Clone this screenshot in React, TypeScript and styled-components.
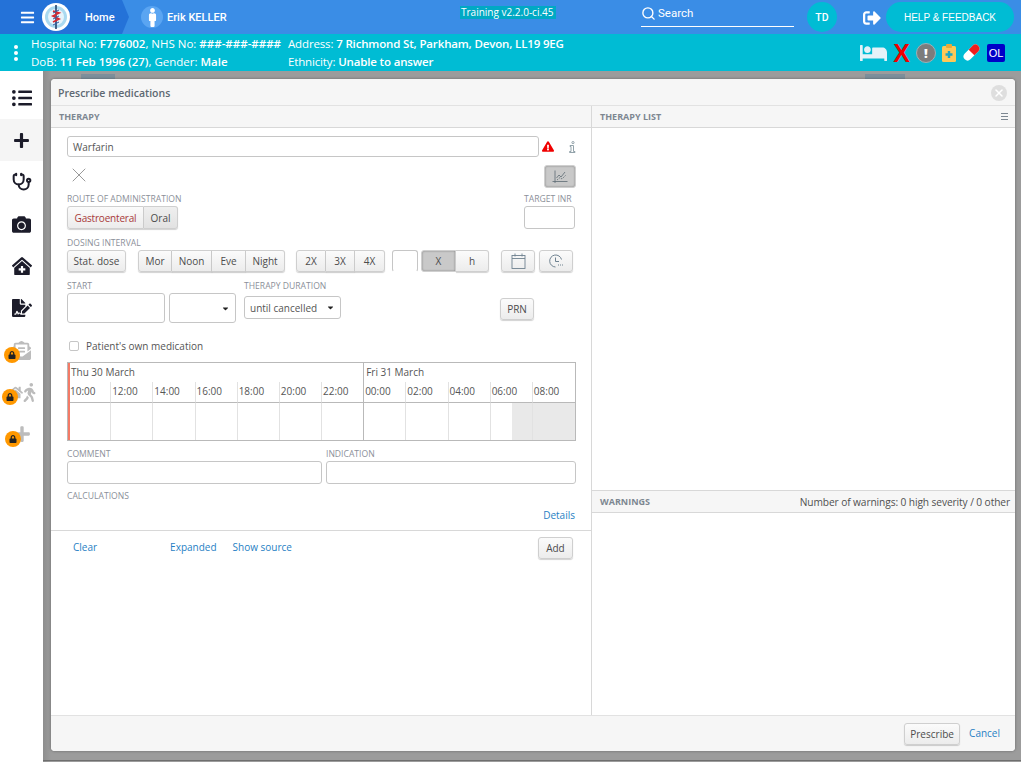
import React from 'react';
import styled, { createGlobalStyle } from 'styled-components';
import { Stethoscope, Search, X } from 'lucide-react';
import {
  FaBars,
  FaBed,
  FaCamera,
  FaCaretDown,
  FaClinicMedical,
  FaEnvelopeOpenText,
  FaExclamationTriangle,
  FaFileSignature,
  FaHome,
  FaListUl,
  FaLock,
  FaMale,
  FaPlus,
  FaSignOutAlt,
  FaWalking,
} from 'react-icons/fa';

const GlobalStyle = createGlobalStyle`
  html, body {
    margin: 0;
    padding: 0;
    background: #9a9a9a;
  }
  * {
    box-sizing: border-box;
  }
`;

const Page = styled.div`
  width: 1021px;
  height: 762px;
  display: flex;
  flex-direction: column;
  overflow: hidden;
  font-family: 'Open Sans', 'Noto Sans', sans-serif;
  font-size: 10px;
  color: #444;
`;

const TopBar = styled.header`
  height: 34px;
  flex: none;
  display: flex;
  align-items: center;
  background: #3a8de6;
  color: #fff;
  font-family: Roboto, sans-serif;
`;

const HomeCrumb = styled.div`
  height: 34px;
  width: 129px;
  flex: none;
  display: flex;
  align-items: center;
  padding-left: 20px;
  background: #2472d8;
  clip-path: polygon(0 0, 122px 0, 129px 17px, 122px 34px, 0 34px);
  font-size: 11px;
  font-weight: 500;
`;

const HomeLabel = styled.span`
  margin-left: 15px;
`;

const LogoWrap = styled.svg`
  width: 28px;
  height: 28px;
  margin-left: 7px;
  flex: none;
`;

const PatientAvatar = styled.div`
  width: 22px;
  height: 22px;
  margin-left: 12px;
  border-radius: 50%;
  background: #5aa5f2;
  display: flex;
  align-items: center;
  justify-content: center;
  font-size: 19px;
`;

const PatientName = styled.span`
  margin-left: 4px;
  width: 293px;
  font-size: 11px;
  font-weight: 500;
`;

const VersionTag = styled.span`
  margin-top: -9px;
  padding: 0 1px;
  width: 96px;
  background: #00a9c4;
  font-family: 'Open Sans', sans-serif;
  font-size: 10px;
  font-weight: 500;
  line-height: 13px;
  white-space: nowrap;
`;

const SearchBox = styled.div`
  width: 153px;
  height: 27px;
  margin-left: 85px;
  align-self: flex-start;
  display: flex;
  align-items: center;
  gap: 2px;
  border-bottom: 1px solid #fff;
  font-size: 11.5px;
`;

const UserBadge = styled.div`
  width: 30px;
  height: 30px;
  margin-left: 13px;
  border-radius: 50%;
  background: #00bcd4;
  display: flex;
  align-items: center;
  justify-content: center;
  font-size: 10.5px;
  font-weight: 500;
`;

const LogoutWrap = styled.div`
  margin-left: 26px;
  margin-top: 2px;
  display: flex;
  font-size: 18px;
`;

const HelpButton = styled.div`
  width: 128px;
  height: 30px;
  margin-left: 5px;
  border-radius: 15px;
  background: #00bcd4;
  display: flex;
  align-items: center;
  justify-content: center;
  font-family: 'Liberation Sans', sans-serif;
  font-size: 10px;
`;

const PatientBar = styled.div`
  height: 37px;
  flex: none;
  display: flex;
  align-items: center;
  background: #00bcd4;
  color: #fff;
  font-size: 11.5px;
  line-height: 18px;
`;

const Dots = styled.div`
  width: 31px;
  flex: none;
  display: flex;
  flex-direction: column;
  align-items: center;
  gap: 2px;
  span {
    width: 4px;
    height: 4px;
    border-radius: 50%;
    background: #fff;
  }
`;

const InfoColumn = styled.div<{ $w: number; $tight?: boolean }>`
  width: ${(p) => p.$w}px;
  flex: none;
  white-space: nowrap;
  letter-spacing: ${(p) => (p.$tight ? '-0.15px' : '0')};
  b {
    font-weight: 600;
  }
`;

const StatusIcons = styled.div`
  flex: 1;
  display: flex;
  align-items: center;
  justify-content: flex-end;
  gap: 6px;
  padding-right: 16px;
`;

const BedIcon = styled(FaBed)`
  width: 27px;
  height: 22px;
  color: #e4f2f8;
`;

const RedCross = styled.span`
  font-family: 'Liberation Sans', sans-serif;
  font-size: 25px;
  line-height: 22px;
  font-weight: 700;
  color: #f00000;
`;

const AlertCircle = styled.span`
  width: 20px;
  height: 20px;
  border-radius: 50%;
  background: #7c7c7c;
  border: 1px solid #9fb0b5;
  display: flex;
  align-items: center;
  justify-content: center;
  font-size: 13px;
  font-weight: 800;
  color: #fff;
`;

const OlBadge = styled.span`
  width: 18px;
  height: 18px;
  border-radius: 2px;
  background: #0000c8;
  display: flex;
  align-items: center;
  justify-content: center;
  font-family: 'Liberation Sans', sans-serif;
  font-size: 11px;
  color: #fff;
`;

const Body = styled.div`
  flex: 1;
  min-height: 0;
  display: flex;
`;

const Sidebar = styled.nav`
  width: 43px;
  flex: none;
  display: flex;
  flex-direction: column;
  background: #fff;
  padding-top: 6px;
`;

const NavItem = styled.div<{ $active?: boolean; $off?: boolean }>`
  position: relative;
  height: 42px;
  display: flex;
  align-items: center;
  justify-content: center;
  font-size: 19px;
  color: ${(p) => (p.$off ? '#bcbcbc' : '#1c1c2a')};
  background: ${(p) => (p.$active ? '#f5f5f5' : 'transparent')};
`;

const LockBadge = styled.span<{ $left: number; $top: number }>`
  position: absolute;
  left: ${(p) => p.$left}px;
  top: ${(p) => p.$top}px;
  width: 16px;
  height: 16px;
  border-radius: 50%;
  background: #ff9800;
  display: flex;
  align-items: center;
  justify-content: center;
  font-size: 8px;
  color: #222;
`;

const HouseWalk = styled.span`
  display: flex;
  align-items: center;
  font-size: 15px;
  margin-left: 4px;
  svg + svg {
    margin-left: -3px;
    font-size: 19px;
  }
`;

const Main = styled.main`
  position: relative;
  flex: 1;
  min-width: 0;
  display: flex;
  padding: 8px 6px 11px 8px;
  background: linear-gradient(to right, #8e8e8e, #9c9c9c 8px);
`;

const GhostTab = styled.span<{ $left: number; $w: number }>`
  position: absolute;
  top: 3px;
  left: ${(p) => p.$left}px;
  width: ${(p) => p.$w}px;
  height: 5px;
  background: #7d8f9b;
`;

const GhostLine = styled.span`
  position: absolute;
  left: 0;
  right: 0;
  bottom: 1px;
  height: 1px;
  background: #6e6e6e;
`;

const Dialog = styled.section`
  position: relative;
  flex: 1;
  display: flex;
  flex-direction: column;
  border-radius: 4px;
  overflow: hidden;
  background: #fff;
  box-shadow: 0 0 3px rgba(0, 0, 0, 0.35);
`;

const DialogHeader = styled.div`
  height: 27px;
  flex: none;
  display: flex;
  align-items: center;
  justify-content: space-between;
  padding: 1px 8px 0 7px;
  background: #f6f6f6;
  border-bottom: 1px solid #e2e2e2;
`;

const DialogTitle = styled.span`
  font-size: 10.5px;
  font-weight: 600;
  color: #5d6872;
`;

const CloseButton = styled.span`
  width: 16px;
  height: 16px;
  border-radius: 50%;
  background: #dedede;
  color: #fff;
  display: flex;
  align-items: center;
  justify-content: center;
`;

const Panes = styled.div`
  flex: 1;
  min-height: 0;
  display: flex;
`;

const LeftPane = styled.div`
  width: 541px;
  flex: none;
  display: flex;
  flex-direction: column;
  border-right: 1px solid #d8d8d8;
`;

const RightPane = styled.div`
  flex: 1;
  display: flex;
  flex-direction: column;
`;

const SectionHeader = styled.div`
  height: 22px;
  flex: none;
  display: flex;
  align-items: center;
  justify-content: space-between;
  padding: 0 8px;
  background: #f6f6f6;
  border-bottom: 1px solid #d8d8d8;
  font-size: 9px;
  font-weight: 700;
  color: #7d8791;
`;

const WarningsHeader = styled(SectionHeader)`
  height: 23px;
  border-top: 1px solid #d8d8d8;
  padding-right: 5px;
`;

const WarningCount = styled.span`
  font-size: 10.2px;
  font-weight: 400;
  letter-spacing: -0.1px;
  color: #505050;
`;

const MenuGlyph = styled.span`
  width: 7px;
  height: 7px;
  margin-right: -1px;
  border-top: 1px solid #7d8791;
  border-bottom: 1px solid #7d8791;
  display: flex;
  align-items: center;
  &::before {
    content: '';
    width: 100%;
    height: 1px;
    background: #7d8791;
  }
`;

const ListArea = styled.div`
  flex: 1;
`;

const WarningArea = styled.div`
  height: 202px;
  flex: none;
`;

const Form = styled.div`
  height: 403px;
  flex: none;
  display: flex;
  flex-direction: column;
  padding: 8px 15px 0 16px;
  border-bottom: 1px solid #d8d8d8;
`;

const Row = styled.div<{ $top?: number }>`
  display: flex;
  align-items: flex-start;
  margin-top: ${(p) => p.$top ?? 0}px;
`;

const SpacedRow = styled(Row)`
  justify-content: space-between;
`;

const Field = styled.div<{ $ml?: number; $mt?: number; $mr?: number }>`
  display: flex;
  flex-direction: column;
  margin: ${(p) => p.$mt ?? 0}px ${(p) => p.$mr ?? 0}px 0 ${(p) => p.$ml ?? 0}px;
`;

const Label = styled.label`
  height: 13px;
  font-size: 8.6px;
  line-height: 13px;
  white-space: nowrap;
  color: #8b8f99;
  text-transform: uppercase;
`;

const TextBox = styled.div<{ $w: number; $h?: number; $ml?: number; $mt?: number; $open?: boolean }>`
  width: ${(p) => p.$w}px;
  height: ${(p) => p.$h ?? 23}px;
  margin: ${(p) => p.$mt ?? 0}px 0 0 ${(p) => p.$ml ?? 0}px;
  display: flex;
  align-items: center;
  justify-content: space-between;
  padding: 0 5px;
  background: #fff;
  border: 1px solid #c6c6c6;
  border-bottom-color: ${(p) => (p.$open ? 'transparent' : '#c6c6c6')};
  border-radius: 3px;
  font-size: 10px;
  color: #555;
`;

const Btn = styled.button<{ $w: number; $h?: number; $ml?: number; $mt?: number; $pressed?: boolean; $dark?: boolean; $danger?: boolean }>`
  width: ${(p) => p.$w}px;
  height: ${(p) => p.$h ?? 22}px;
  margin: ${(p) => p.$mt ?? 0}px 0 0 ${(p) => p.$ml ?? 0}px;
  padding: 0;
  display: flex;
  align-items: center;
  justify-content: center;
  flex: none;
  font-family: inherit;
  font-size: 10px;
  letter-spacing: ${(p) => (p.$danger ? '-0.2px' : '0')};
  color: ${(p) => (p.$danger ? '#a83a3a' : '#4c4c4c')};
  border: 1px solid #cfcfcf;
  border-radius: 3px;
  background: ${(p) =>
    p.$pressed
      ? '#c9c9c9'
      : p.$dark
        ? 'linear-gradient(#efefef, #e2e2e2)'
        : 'linear-gradient(#fbfbfb, #ececec)'};
  box-shadow: ${(p) =>
    p.$pressed ? 'inset 0 0 2px #777' : '0 1px 1px rgba(0, 0, 0, 0.18)'};
`;

const BtnGroup = styled.div<{ $ml?: number }>`
  display: flex;
  margin-left: ${(p) => p.$ml ?? 0}px;
  ${Btn} {
    border-radius: 0;
    border-left-width: 0;
  }
  ${Btn}:first-child {
    border-left-width: 1px;
    border-radius: 3px 0 0 3px;
  }
  ${Btn}:last-child {
    border-radius: 0 3px 3px 0;
  }
`;

const ChartToggle = styled(Btn)`
  color: #5d6b74;
`;

const InlineIcons = styled.div`
  margin-left: 3px;
  height: 21px;
  display: flex;
  align-items: center;
  gap: 14px;
`;

const WarnIcon = styled(FaExclamationTriangle)`
  width: 12px;
  height: 11px;
  color: #f00000;
`;

const ClearX = styled(X)`
  margin-top: -2px;
  color: #999;
`;

const Check = styled.span`
  width: 10px;
  height: 10px;
  border: 1px solid #c6c6c6;
  border-radius: 2px;
  background: #fff;
`;

const CheckRow = styled(Row)`
  align-items: center;
  gap: 7px;
  height: 14px;
  padding-left: 2px;
  font-size: 10px;
  color: #555;
`;

const Timeline = styled.div`
  position: relative;
  width: 509px;
  height: 79px;
  flex: none;
  margin-top: 9px;
  padding-left: 1px;
  display: grid;
  grid-template-columns: repeat(12, 1fr);
  grid-template-rows: 19px 21px 1fr;
  border: 1px solid #b9b9b9;
`;

const NowMarker = styled.span`
  position: absolute;
  left: 0;
  top: 0;
  bottom: 0;
  width: 2px;
  background: #f47a66;
`;

const DayLabel = styled.div<{ $span: number; $last?: boolean }>`
  grid-column: span ${(p) => p.$span};
  padding: 3px 0 0 2px;
  font-size: 10px;
  line-height: 13px;
  color: #555;
  border-right: ${(p) => (p.$last ? 'none' : '1px solid #b9b9b9')};
`;

const Hour = styled.div<{ $dayEnd?: boolean; $last?: boolean }>`
  padding-left: 1px;
  font-size: 10px;
  line-height: 18px;
  color: #555;
  border-bottom: 1px solid #b9b9b9;
  border-right: ${(p) =>
    p.$last ? 'none' : p.$dayEnd ? '1px solid #b9b9b9' : '1px solid #e2e2e2'};
`;

const Slot = styled.div<{ $dayEnd?: boolean; $last?: boolean; $shade?: 'half' | 'full' }>`
  border-right: ${(p) =>
    p.$last ? 'none' : p.$dayEnd ? '1px solid #b9b9b9' : '1px solid #e2e2e2'};
  background: ${(p) =>
    p.$shade === 'full'
      ? '#e9e9e9'
      : p.$shade === 'half'
        ? 'linear-gradient(to right, transparent 50%, #e9e9e9 50%)'
        : 'transparent'};
`;

const DetailsRow = styled(Row)`
  justify-content: flex-end;
  height: 13px;
  padding-right: 1px;
`;

const LinkText = styled.a<{ $ml?: number }>`
  margin-left: ${(p) => p.$ml ?? 0}px;
  font-size: 10px;
  line-height: 13px;
  color: #1f7fc4;
  white-space: nowrap;
`;

const Actions = styled.div`
  height: 42px;
  flex: none;
  display: flex;
  align-items: flex-start;
  padding: 6px 18px 0 22px;
`;

const ActionLink = styled(LinkText)`
  margin-top: 4px;
`;

const Footer = styled.footer`
  height: 36px;
  flex: none;
  display: flex;
  align-items: center;
  justify-content: flex-end;
  gap: 9px;
  padding: 0 15px 0 0;
  background: #f6f6f6;
  border-top: 1px solid #e2e2e2;
`;

const hours = ['10:00', '12:00', '14:00', '16:00', '18:00', '20:00', '22:00', '00:00', '02:00', '04:00', '06:00', '08:00'];

const Logo = () => (
  <LogoWrap viewBox="0 0 28 28">
    <circle cx="14" cy="14" r="14" fill="#fff" />
    <circle cx="14" cy="14" r="11" fill="#a9d9f0" />
    <circle cx="14" cy="14" r="8" fill="#e6f4fb" />
    <rect x="13.2" y="2" width="1.6" height="24" fill="#26456e" />
    <path d="M11 8 L17 10 L11 13 L17 16 L11 19" fill="none" stroke="#d8282f" strokeWidth="1.8" />
    <path d="M17 7 L11 10 M17 13 L11 16 M17 19 L11 22" fill="none" stroke="#2a5da8" strokeWidth="1" />
  </LogoWrap>
);

const ClipboardIcon = () => (
  <svg width="14" height="18" viewBox="0 0 14 18">
    <rect x="0" y="2" width="14" height="16" rx="1.5" fill="#ffc857" />
    <rect x="4" y="0" width="6" height="4" rx="1" fill="#e9a93a" />
    <path d="M7 7 V14 M3.5 10.5 H10.5" stroke="#1ba7c4" strokeWidth="2.4" />
  </svg>
);

const PillIcon = () => (
  <svg width="19" height="19" viewBox="0 0 19 19">
    <g transform="rotate(-45 9.5 9.5)">
      <rect x="0" y="5.5" width="19" height="8" rx="4" fill="#fff" />
      <path d="M9.5 5.5 H15 a4 4 0 0 1 0 8 H9.5 Z" fill="#f01c1c" />
    </g>
  </svg>
);

const ChartIcon = () => (
  <svg width="16" height="14" viewBox="0 0 16 14" fill="none" stroke="currentColor" strokeWidth="0.8">
    <path d="M3 0.5 V13 M0.5 11.5 H15.5" />
    <path d="M4.5 8 L7 5 L9 7 L13 2" />
    <path d="M5 10 L8 7.5 L10 9 L14 5" strokeDasharray="1.5 1" />
  </svg>
);

const InfoGlyph = () => (
  <svg width="8" height="12" viewBox="0 0 8 12" fill="none" stroke="#93a3ab" strokeWidth="1">
    <circle cx="5" cy="1.6" r="1.1" />
    <path d="M2 4.5 H5.5 V10.5 H7 V11.5 H1.5 V10.5 H3 V5.5 H2 Z" />
  </svg>
);

const CalendarIcon = () => (
  <svg width="15" height="16" viewBox="0 0 15 16" fill="none" stroke="#6f8290" strokeWidth="0.9">
    <rect x="1" y="2.5" width="13" height="13" />
    <path d="M1 5.5 H14 M4 0.5 V3.5 M11 0.5 V3.5" />
  </svg>
);

const ClockIcon = () => (
  <svg width="15" height="14" viewBox="0 0 15 14" fill="none" stroke="#6f8290" strokeWidth="1">
    <path d="M12.5 5.5 A6 6 0 1 0 6.5 13" />
    <path d="M6.5 3.5 V7.5 H10" />
    <path d="M9 11 H14" strokeDasharray="1 1" />
  </svg>
);

const App = () => (
  <Page>
    <GlobalStyle />
    <TopBar>
      <HomeCrumb>
        <FaBars size={15} />
        <Logo />
        <HomeLabel>Home</HomeLabel>
      </HomeCrumb>
      <PatientAvatar>
        <FaMale />
      </PatientAvatar>
      <PatientName>Erik KELLER</PatientName>
      <VersionTag>Training v2.2.0-ci.45</VersionTag>
      <SearchBox>
        <Search size={15} strokeWidth={2.2} />
        Search
      </SearchBox>
      <UserBadge>TD</UserBadge>
      <LogoutWrap>
        <FaSignOutAlt />
      </LogoutWrap>
      <HelpButton>HELP &amp; FEEDBACK</HelpButton>
    </TopBar>
    <PatientBar>
      <Dots>
        <span />
        <span />
        <span />
      </Dots>
      <InfoColumn $w={257}>
        Hospital No: <b>F776002</b>, NHS No: <b>###-###-####</b>
        <br />
        DoB: <b>11 Feb 1996 (27)</b>, Gender: <b>Male</b>
      </InfoColumn>
      <InfoColumn $w={300} $tight>
        Address: <b>7 Richmond St, Parkham, Devon, LL19 9EG</b>
        <br />
        Ethnicity: <b>Unable to answer</b>
      </InfoColumn>
      <StatusIcons>
        <BedIcon />
        <RedCross>X</RedCross>
        <AlertCircle>!</AlertCircle>
        <ClipboardIcon />
        <PillIcon />
        <OlBadge>OL</OlBadge>
      </StatusIcons>
    </PatientBar>
    <Body>
      <Sidebar>
        <NavItem>
          <FaListUl size={20} />
        </NavItem>
        <NavItem $active>
          <FaPlus size={17} />
        </NavItem>
        <NavItem>
          <Stethoscope size={20} strokeWidth={2.4} />
        </NavItem>
        <NavItem>
          <FaCamera />
        </NavItem>
        <NavItem>
          <FaClinicMedical size={20} />
        </NavItem>
        <NavItem>
          <FaFileSignature size={20} />
        </NavItem>
        <NavItem $off>
          <FaEnvelopeOpenText />
          <LockBadge $left={4} $top={18}>
            <FaLock />
          </LockBadge>
        </NavItem>
        <NavItem $off>
          <HouseWalk>
            <FaHome />
            <FaWalking />
          </HouseWalk>
          <LockBadge $left={2} $top={18}>
            <FaLock />
          </LockBadge>
        </NavItem>
        <NavItem $off>
          <FaPlus size={18} />
          <LockBadge $left={5} $top={18}>
            <FaLock />
          </LockBadge>
        </NavItem>
      </Sidebar>
      <Main>
        <GhostTab $left={38} $w={34} />
        <GhostTab $left={822} $w={40} />
        <GhostLine />
        <Dialog>
          <DialogHeader>
            <DialogTitle>Prescribe medications</DialogTitle>
            <CloseButton>
              <X size={12} strokeWidth={3} />
            </CloseButton>
          </DialogHeader>
          <Panes>
            <LeftPane>
              <SectionHeader>THERAPY</SectionHeader>
              <Form>
                <Row>
                  <TextBox $w={472} $h={21}>
                    Warfarin
                  </TextBox>
                  <InlineIcons>
                    <WarnIcon />
                    <InfoGlyph />
                  </InlineIcons>
                </Row>
                <SpacedRow $top={8}>
                  <ClearX size={24} strokeWidth={1} />
                  <ChartToggle $w={32} $h={23} $pressed>
                    <ChartIcon />
                  </ChartToggle>
                </SpacedRow>
                <SpacedRow $top={5}>
                  <Field>
                    <Label>Route of administration</Label>
                    <BtnGroup>
                      <Btn $w={77} $h={23} $danger>
                        Gastroenteral
                      </Btn>
                      <Btn $w={34} $h={23} $dark>
                        Oral
                      </Btn>
                    </BtnGroup>
                  </Field>
                  <Field $mr={1}>
                    <Label>Target INR</Label>
                    <TextBox $w={51} />
                  </Field>
                </SpacedRow>
                <Field $mt={8}>
                  <Label as="div">Dosing interval</Label>
                </Field>
                <Row>
                  <Btn $w={59}>Stat. dose</Btn>
                  <BtnGroup $ml={12}>
                    <Btn $w={34}>Mor</Btn>
                    <Btn $w={40}>Noon</Btn>
                    <Btn $w={34}>Eve</Btn>
                    <Btn $w={39}>Night</Btn>
                  </BtnGroup>
                  <BtnGroup $ml={11}>
                    <Btn $w={30}>2X</Btn>
                    <Btn $w={29}>3X</Btn>
                    <Btn $w={30}>4X</Btn>
                  </BtnGroup>
                  <TextBox $w={26} $h={22} $ml={7} $open />
                  <BtnGroup $ml={3}>
                    <Btn $w={35} $pressed>
                      X
                    </Btn>
                    <Btn $w={33}>h</Btn>
                  </BtnGroup>
                  <Btn $w={34} $ml={12}>
                    <CalendarIcon />
                  </Btn>
                  <Btn $w={34} $ml={4}>
                    <ClockIcon />
                  </Btn>
                </Row>
                <Row $top={8}>
                  <Field>
                    <Label>Start</Label>
                    <Row>
                      <TextBox $w={98} $h={30} />
                      <TextBox $w={67} $h={30} $ml={4}>
                        <span />
                        <FaCaretDown size={9} color="#222" />
                      </TextBox>
                    </Row>
                  </Field>
                  <Field $ml={8}>
                    <Label>Therapy duration</Label>
                    <TextBox $w={97} $h={23} $mt={3}>
                      until cancelled
                      <FaCaretDown size={9} color="#222" />
                    </TextBox>
                  </Field>
                  <Btn $w={34} $ml={159} $mt={18}>
                    PRN
                  </Btn>
                </Row>
                <CheckRow $top={16}>
                  <Check />
                  Patient's own medication
                </CheckRow>
                <Timeline>
                  <DayLabel $span={7}>Thu 30 March</DayLabel>
                  <DayLabel $span={5} $last>
                    Fri 31 March
                  </DayLabel>
                  {hours.map((h, i) => (
                    <Hour key={h} $dayEnd={i === 6} $last={i === 11}>
                      {h}
                    </Hour>
                  ))}
                  {hours.map((h, i) => (
                    <Slot
                      key={h}
                      $dayEnd={i === 6}
                      $last={i === 11}
                      $shade={i === 10 ? 'half' : i === 11 ? 'full' : undefined}
                    />
                  ))}
                  <NowMarker />
                </Timeline>
                <Row $top={7}>
                  <Field>
                    <Label>Comment</Label>
                    <TextBox $w={255} />
                  </Field>
                  <Field $ml={4}>
                    <Label>Indication</Label>
                    <TextBox $w={250} />
                  </Field>
                </Row>
                <Field $mt={6}>
                  <Label as="div">Calculations</Label>
                </Field>
                <DetailsRow $top={6}>
                  <LinkText>Details</LinkText>
                </DetailsRow>
              </Form>
              <Actions>
                <ActionLink>Clear</ActionLink>
                <ActionLink $ml={73}>Expanded</ActionLink>
                <ActionLink $ml={16}>Show source</ActionLink>
                <Btn $w={35} $ml={246}>
                  Add
                </Btn>
              </Actions>
            </LeftPane>
            <RightPane>
              <SectionHeader>
                THERAPY LIST
                <MenuGlyph />
              </SectionHeader>
              <ListArea />
              <WarningsHeader>
                WARNINGS
                <WarningCount>Number of warnings: 0 high severity / 0 other</WarningCount>
              </WarningsHeader>
              <WarningArea />
            </RightPane>
          </Panes>
          <Footer>
            <Btn $w={56}>Prescribe</Btn>
            <LinkText>Cancel</LinkText>
          </Footer>
        </Dialog>
      </Main>
    </Body>
  </Page>
);

export default App;
